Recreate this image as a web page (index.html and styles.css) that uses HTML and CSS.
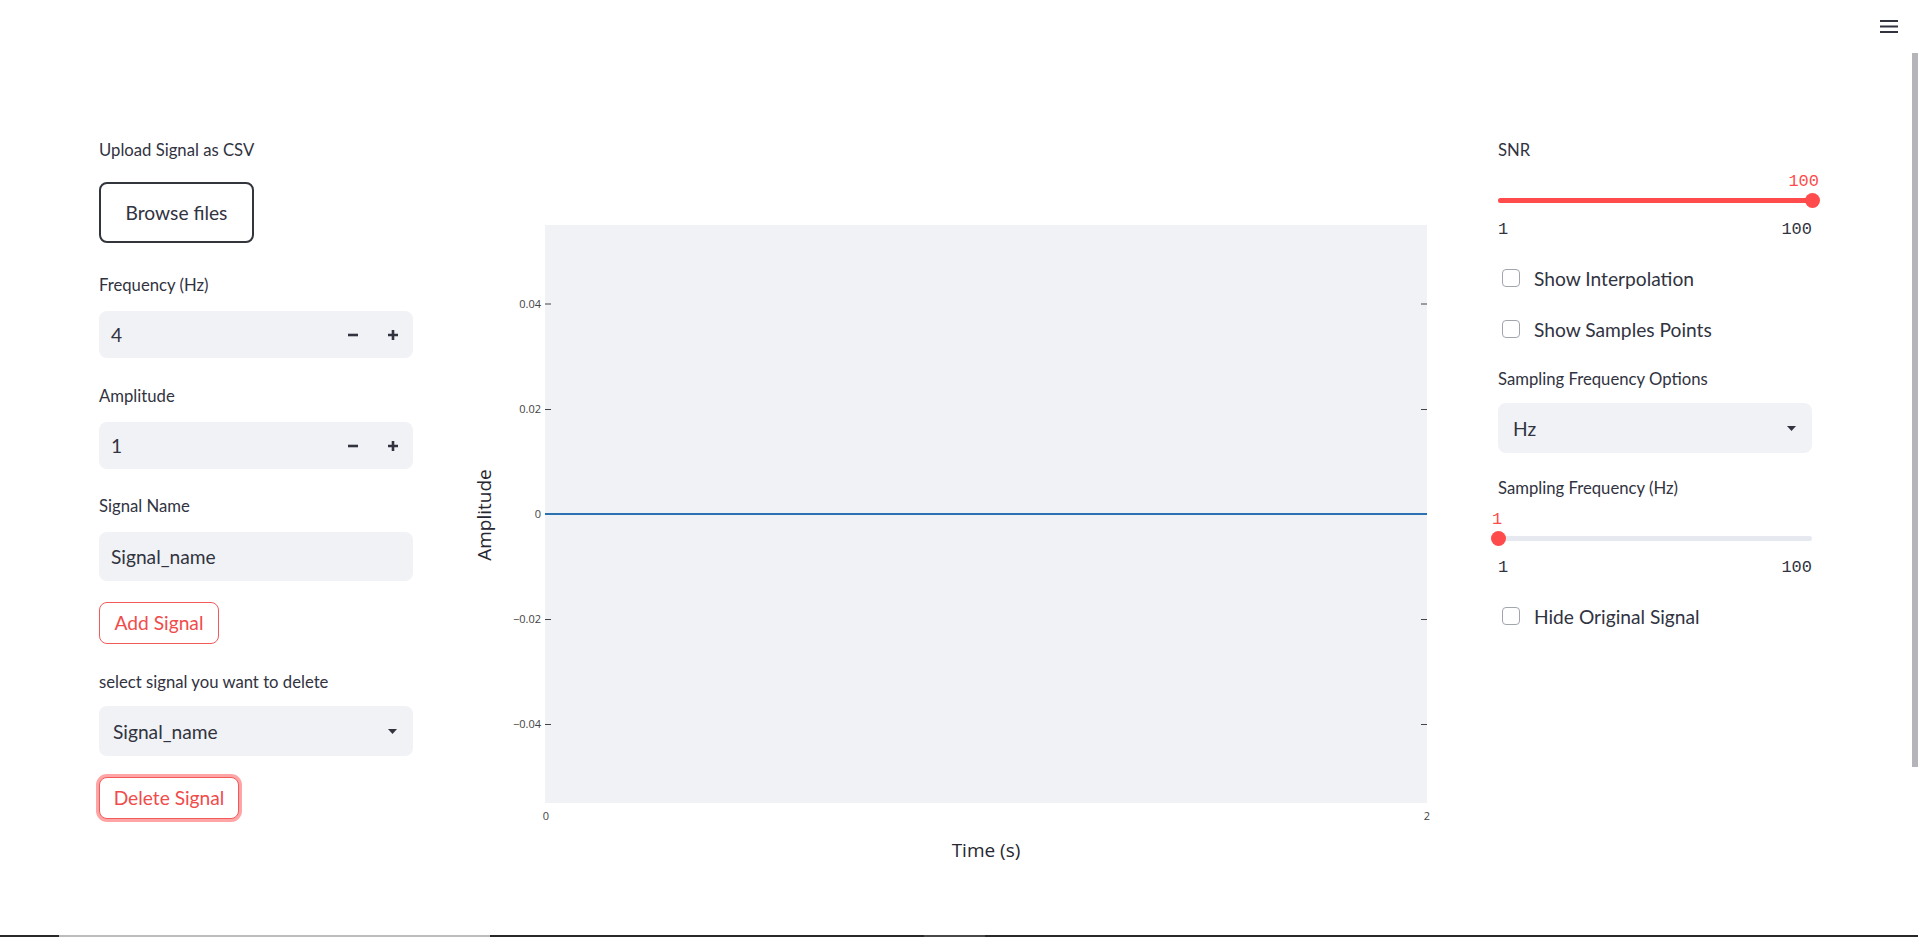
FILE: index.html
```html
<!DOCTYPE html>
<html lang="en">
<head>
<meta charset="utf-8">
<title>Signal Sampling Studio</title>
<link rel="stylesheet" href="styles.css">
</head>
<body>
<div class="window">
  <div class="viewport">
    <header class="topbar">
      <button class="menu-btn" aria-label="Main menu">
        <svg width="18" height="14" viewBox="0 0 18 14"><path d="M0 1h18M0 6.5h18M0 12h18" stroke="#31333f" stroke-width="2"/></svg>
      </button>
    </header>

    <main class="main">
      <!-- left column -->
      <section class="col">
        <div class="field field-upload">
          <label class="label">Upload Signal as CSV</label>
          <button class="btn btn-upload">Browse files</button>
        </div>

        <div class="field gap-lg">
          <label class="label">Frequency (Hz)</label>
          <div class="num">
            <span class="num-value">4</span>
            <span class="step"><svg width="10" height="10" viewBox="0 0 10 10"><path d="M0 5h10" stroke="#31333f" stroke-width="2.6"/></svg></span>
            <span class="step"><svg width="10" height="10" viewBox="0 0 10 10"><path d="M0 5h10M5 0v10" stroke="#31333f" stroke-width="2.6"/></svg></span>
          </div>
        </div>

        <div class="field gap-md">
          <label class="label">Amplitude</label>
          <div class="num">
            <span class="num-value">1</span>
            <span class="step"><svg width="10" height="10" viewBox="0 0 10 10"><path d="M0 5h10" stroke="#31333f" stroke-width="2.6"/></svg></span>
            <span class="step"><svg width="10" height="10" viewBox="0 0 10 10"><path d="M0 5h10M5 0v10" stroke="#31333f" stroke-width="2.6"/></svg></span>
          </div>
        </div>

        <div class="field">
          <label class="label">Signal Name</label>
          <div class="text-input">Signal_name</div>
        </div>

        <button class="btn btn-red btn-add gap-sm">Add Signal</button>

        <div class="field field-select gap-md">
          <label class="label">select signal you want to delete</label>
          <div class="select">
            <span>Signal_name</span>
            <svg class="caret" width="9" height="5" viewBox="0 0 9 5"><path d="M0 0h9L4.5 5z" fill="#31333f"/></svg>
          </div>
        </div>

        <button class="btn btn-red btn-delete btn-focus gap-sm">Delete Signal</button>
      </section>

      <!-- chart column -->
      <section class="col chart">
        <svg width="1045" height="740" viewBox="0 0 1045 740">
          <rect x="112" y="87" width="882" height="578" fill="#f0f2f6"/>
          <g stroke="#444" stroke-width="1">
            <path d="M112 166h6M112 271.5h6M112 376.5h6M112 481.5h6M112 586.5h6"/>
            <path d="M988 166h6M988 271.5h6M988 376.5h6M988 481.5h6M988 586.5h6"/>
          </g>
          <g class="tick" text-anchor="end">
            <text x="108" y="170">0.04</text>
            <text x="108" y="275">0.02</text>
            <text x="108" y="380">0</text>
            <text x="108" y="485">−0.02</text>
            <text x="108" y="590">−0.04</text>
          </g>
          <g class="tick" text-anchor="middle">
            <text x="113" y="682">0</text>
            <text x="994" y="682">2</text>
          </g>
          <path d="M112 376h882" stroke="#2d72b0" stroke-width="2"/>
          <text class="axis-title" x="553" y="719" text-anchor="middle">Time (s)</text>
          <text class="axis-title" transform="translate(58 377) rotate(-90)" text-anchor="middle">Amplitude</text>
        </svg>
      </section>

      <!-- right column -->
      <section class="col">
        <div class="slider">
          <label class="label">SNR</label>
          <div class="slider-value end">100</div>
          <div class="track">
            <div class="rail"><div class="fill" style="width:100%"></div></div>
            <div class="thumb" style="left:100%"></div>
          </div>
          <div class="slider-range"><span>1</span><span>100</span></div>
        </div>

        <div class="check"><span class="box"></span>Show Interpolation</div>
        <div class="check"><span class="box"></span>Show Samples Points</div>

        <div class="field field-select">
          <label class="label">Sampling Frequency Options</label>
          <div class="select select-right">
            <span>Hz</span>
            <svg class="caret" width="9" height="5" viewBox="0 0 9 5"><path d="M0 0h9L4.5 5z" fill="#31333f"/></svg>
          </div>
        </div>

        <div class="slider gap-xs">
          <label class="label">Sampling Frequency (Hz)</label>
          <div class="slider-value start">1</div>
          <div class="track">
            <div class="rail"><div class="fill" style="width:0%"></div></div>
            <div class="thumb" style="left:0%"></div>
          </div>
          <div class="slider-range"><span>1</span><span>100</span></div>
        </div>

        <div class="check"><span class="box"></span>Hide Original Signal</div>
      </section>
    </main>
  </div>

  <div class="scrollbar"><div class="scroll-thumb"></div></div>
</div>
<div class="taskbar"></div>
</body>
</html>
```

FILE: styles.css
```css
* { box-sizing: border-box; }

html, body { margin: 0; padding: 0; }

body {
  width: 1918px;
  height: 937px;
  overflow: hidden;
  background: #ffffff;
  font-family: Lato, "Noto Sans", sans-serif;
  color: #31333f;
}

.window {
  display: flex;
  height: 935px;
}

.viewport {
  flex: 1;
  min-width: 0;
  display: flex;
  flex-direction: column;
}

.topbar {
  height: 60px;
  display: flex;
  justify-content: flex-end;
  align-items: flex-start;
  padding: 20px 12px 0 0;
}

.menu-btn {
  border: 0;
  background: none;
  padding: 0;
  display: block;
  line-height: 0;
}

.main {
  display: grid;
  grid-template-columns: 314px 1fr 314px;
  column-gap: 20px;
  padding: 78px 98px 0 99px;
  align-items: start;
}

.col {
  display: flex;
  flex-direction: column;
  align-items: stretch;
}

.col > * + * { margin-top: 25px; }
.col > .gap-lg { margin-top: 30px; }
.col > .gap-md { margin-top: 26px; }
.col > .gap-sm { margin-top: 21px; }
.col > .gap-xs { margin-top: 23px; }

.field {
  display: flex;
  flex-direction: column;
  gap: 14px;
}
.field-upload { gap: 20px; align-items: flex-start; }
.field-select { gap: 12px; }

.label {
  display: block;
  font-size: 16.7px;
  line-height: 24px;
  color: #31333f;
}

/* buttons */
.btn {
  align-self: flex-start;
  font-family: inherit;
  font-size: 19.2px;
  height: 42px;
  padding: 0 14px;
  border-radius: 8px;
  background: #ffffff;
  display: inline-flex;
  align-items: center;
  justify-content: center;
  line-height: 1;
}

.btn-upload {
  height: 61px;
  width: 155px;
  padding: 0;
  border: 2px solid #33353d;
  color: #31333f;
}

.btn-red {
  border: 1px solid #f25a5a;
  color: #f04b4b;
}
.btn-add { width: 120px; padding: 0; }
.btn-delete { width: 140px; padding: 0; }

.btn-focus {
  box-shadow: 0 0 0 3px rgba(255, 75, 75, 0.5);
}

/* number input */
.num {
  height: 47px;
  display: flex;
  align-items: center;
  background: #f0f2f6;
  border-radius: 8px;
  padding-left: 12px;
  font-size: 19.2px;
}
.num-value { flex: 1; }
.step {
  width: 40px;
  height: 100%;
  display: flex;
  align-items: center;
  justify-content: center;
}

.text-input {
  height: 49px;
  display: flex;
  align-items: center;
  background: #f0f2f6;
  border-radius: 8px;
  padding: 0 12px;
  font-size: 19.2px;
}

.select {
  height: 50px;
  display: flex;
  align-items: center;
  justify-content: space-between;
  background: #f0f2f6;
  border-radius: 8px;
  padding: 0 16px 0 14px;
  font-size: 19.2px;
}
.select-right { padding-left: 15px; }
.caret { display: block; }

/* chart */
.chart svg { display: block; }
.tick {
  font-family: "Open Sans", "Liberation Sans", sans-serif;
  font-size: 11px;
  fill: #444444;
}
.axis-title {
  font-family: "Open Sans", "Liberation Sans", sans-serif;
  font-size: 19px;
  fill: #262730;
}

/* sliders */
.slider { display: flex; flex-direction: column; }

.slider-value {
  margin-top: 10px;
  height: 20px;
  display: flex;
  font-family: "Liberation Mono", monospace;
  font-size: 17px;
  line-height: 20px;
  color: #ff4b4b;
}
.slider-value.end { justify-content: flex-end; margin-right: -7px; }
.slider-value.start { justify-content: flex-start; margin-left: -6px; }

.track {
  position: relative;
  height: 16px;
  display: flex;
  align-items: center;
}
.rail {
  width: 100%;
  height: 5px;
  border-radius: 3px;
  background: #e6e9ef;
}
.fill {
  height: 100%;
  border-radius: 3px;
  background: #ff4b4b;
}
.thumb {
  position: absolute;
  top: 50%;
  width: 15px;
  height: 15px;
  margin: -7.5px 0 0 -7.5px;
  border-radius: 50%;
  background: #ff4b4b;
}

.slider-range {
  margin-top: 12px;
  display: flex;
  justify-content: space-between;
  font-family: "Liberation Mono", monospace;
  font-size: 17px;
  line-height: 20px;
  color: #31333f;
}

/* checkboxes */
.check {
  height: 26px;
  display: flex;
  align-items: center;
  padding-left: 4px;
  font-size: 19.2px;
}
.box {
  width: 18px;
  height: 18px;
  border: 1.5px solid #a3a5ad;
  border-radius: 4px;
  background: #ffffff;
  margin-right: 14px;
  flex: none;
}

/* scrollbar */
.scrollbar {
  width: 8px;
  padding: 53px 0 0 2px;
}
.scroll-thumb {
  width: 6px;
  height: 714px;
  background: #b5b5b9;
}

.taskbar {
  height: 2px;
  background: linear-gradient(to right,
    #2a2826 0, #2a2826 59px,
    #bcbcbc 59px, #bcbcbc 490px,
    #2a2826 490px, #2a2826 924px,
    #4a4846 924px, #4a4846 985px,
    #2a2826 985px, #2a2826 100%);
}
```
